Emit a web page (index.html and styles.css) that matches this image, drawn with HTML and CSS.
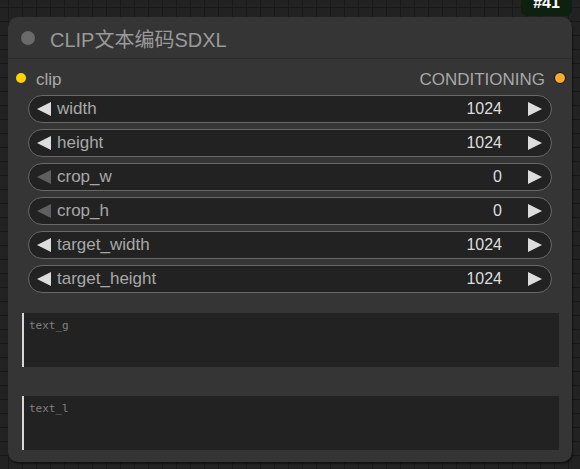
FILE: index.html
```html
<!DOCTYPE html>
<html>
<head>
<meta charset="utf-8">
<link rel="stylesheet" href="styles.css">
</head>
<body>
<div class="canvas">
  <div class="badge">#41</div>
  <div class="node">
    <div class="title">
      <span class="title-dot"></span>
      <span class="title-text">CLIP文本编码SDXL</span>
    </div>
    <div class="body">
      <div class="slots">
        <div class="slot-in"><span class="dot dot-in"></span><span>clip</span></div>
        <div class="slot-out"><span>CONDITIONING</span><span class="dot dot-out"></span></div>
      </div>
      <div class="widgets">
        <div class="widget"><span class="arrow left"></span><span class="label">width</span><span class="value">1024</span><span class="arrow right"></span></div>
        <div class="widget"><span class="arrow left"></span><span class="label">height</span><span class="value">1024</span><span class="arrow right"></span></div>
        <div class="widget"><span class="arrow left dim"></span><span class="label">crop_w</span><span class="value">0</span><span class="arrow right"></span></div>
        <div class="widget"><span class="arrow left dim"></span><span class="label">crop_h</span><span class="value">0</span><span class="arrow right"></span></div>
        <div class="widget"><span class="arrow left"></span><span class="label">target_width</span><span class="value">1024</span><span class="arrow right"></span></div>
        <div class="widget"><span class="arrow left"></span><span class="label">target_height</span><span class="value">1024</span><span class="arrow right"></span></div>
      </div>
      <div class="texts">
        <div class="textbox">text_g</div>
        <div class="textbox">text_l</div>
      </div>
    </div>
  </div>
</div>
</body>
</html>
```
FILE: styles.css
```css
html, body {
  margin: 0;
  padding: 0;
}
body {
  width: 580px;
  height: 469px;
  overflow: hidden;
  background-color: #222222;
  background-image:
    linear-gradient(to right, #191919 1px, transparent 1px),
    linear-gradient(to bottom, #191919 1px, transparent 1px);
  background-size: 14px 14px;
  background-position: 8px 7px;
  font-family: "Liberation Sans", Arial, "Noto Sans CJK SC", sans-serif;
}
.canvas {
  position: relative;
  padding: 17px 0 0 8px;
}
.badge {
  position: absolute;
  left: 521px;
  top: -5px;
  width: 51px;
  height: 21px;
  background: #0e200f;
  border-radius: 6px;
  color: #ffffff;
  font-weight: bold;
  font-size: 16px;
  line-height: 16px;
  text-align: center;
}
.node {
  position: relative;
  width: 564px;
  height: 445px;
  background: #353535;
  border-radius: 10px;
  box-shadow: 1px 2px 2px rgba(0,0,0,0.45);
  display: flex;
  flex-direction: column;
}
.title {
  height: 42px;
  border-bottom: 1px solid #2b2b2b;
  display: flex;
  align-items: center;
  box-sizing: border-box;
}
.title-dot {
  width: 14px;
  height: 14px;
  border-radius: 50%;
  background: #6a6a6a;
  margin-left: 13px;
  margin-right: 15px;
  margin-top: 1px;
}
.title-text {
  color: #9a9a9a;
  font-size: 20px;
  margin-top: 1px;
}
.body {
  display: flex;
  flex-direction: column;
}
.slots {
  height: 36px;
  box-sizing: border-box;
  padding-top: 5px;
  display: flex;
  justify-content: space-between;
  align-items: center;
  font-size: 17px;
  color: #a8a8a8;
}
.slot-in, .slot-out {
  display: flex;
  align-items: center;
}
.dot {
  width: 10px;
  height: 10px;
  border-radius: 50%;
  box-sizing: border-box;
}
.dot-in {
  background: #ffd500;
  margin-left: 8px;
  margin-right: 10px;
  margin-top: -3px;
}
.dot-out {
  background: #ffa931;
  border: 1px solid #111;
  width: 12px;
  height: 12px;
  margin-left: 9px;
  margin-right: 6px;
  margin-top: -3px;
}
.widgets {
  display: flex;
  flex-direction: column;
  gap: 6px;
  padding: 0 20px 0 20px;
}
.widget {
  height: 28px;
  box-sizing: border-box;
  border: 1px solid #686868;
  border-radius: 14px;
  background: #222222;
  display: flex;
  align-items: center;
  font-size: 17px;
}
.arrow {
  width: 0;
  height: 0;
  border-top: 7px solid transparent;
  border-bottom: 7px solid transparent;
}
.arrow.left {
  border-right: 14px solid #dddddd;
  margin-left: 8px;
  margin-right: 6px;
}
.arrow.left.dim {
  border-right-color: #5f5f5f;
}
.arrow.right {
  border-left: 14px solid #dddddd;
  margin-left: 26px;
  margin-right: 9px;
}
.label {
  color: #a8a8a8;
  flex: 1;
}
.value {
  color: #dddddd;
  font-size: 16px;
}
.texts {
  display: flex;
  flex-direction: column;
  gap: 29px;
  padding: 20px 13px 0 14px;
}
.textbox {
  height: 54px;
  background: #222222;
  border-left: 2px solid #d8d8d8;
  box-sizing: border-box;
  padding: 6px 0 0 5px;
  font-family: "DejaVu Sans Mono", "Liberation Mono", monospace;
  font-size: 11px;
  color: #808080;
}
```
